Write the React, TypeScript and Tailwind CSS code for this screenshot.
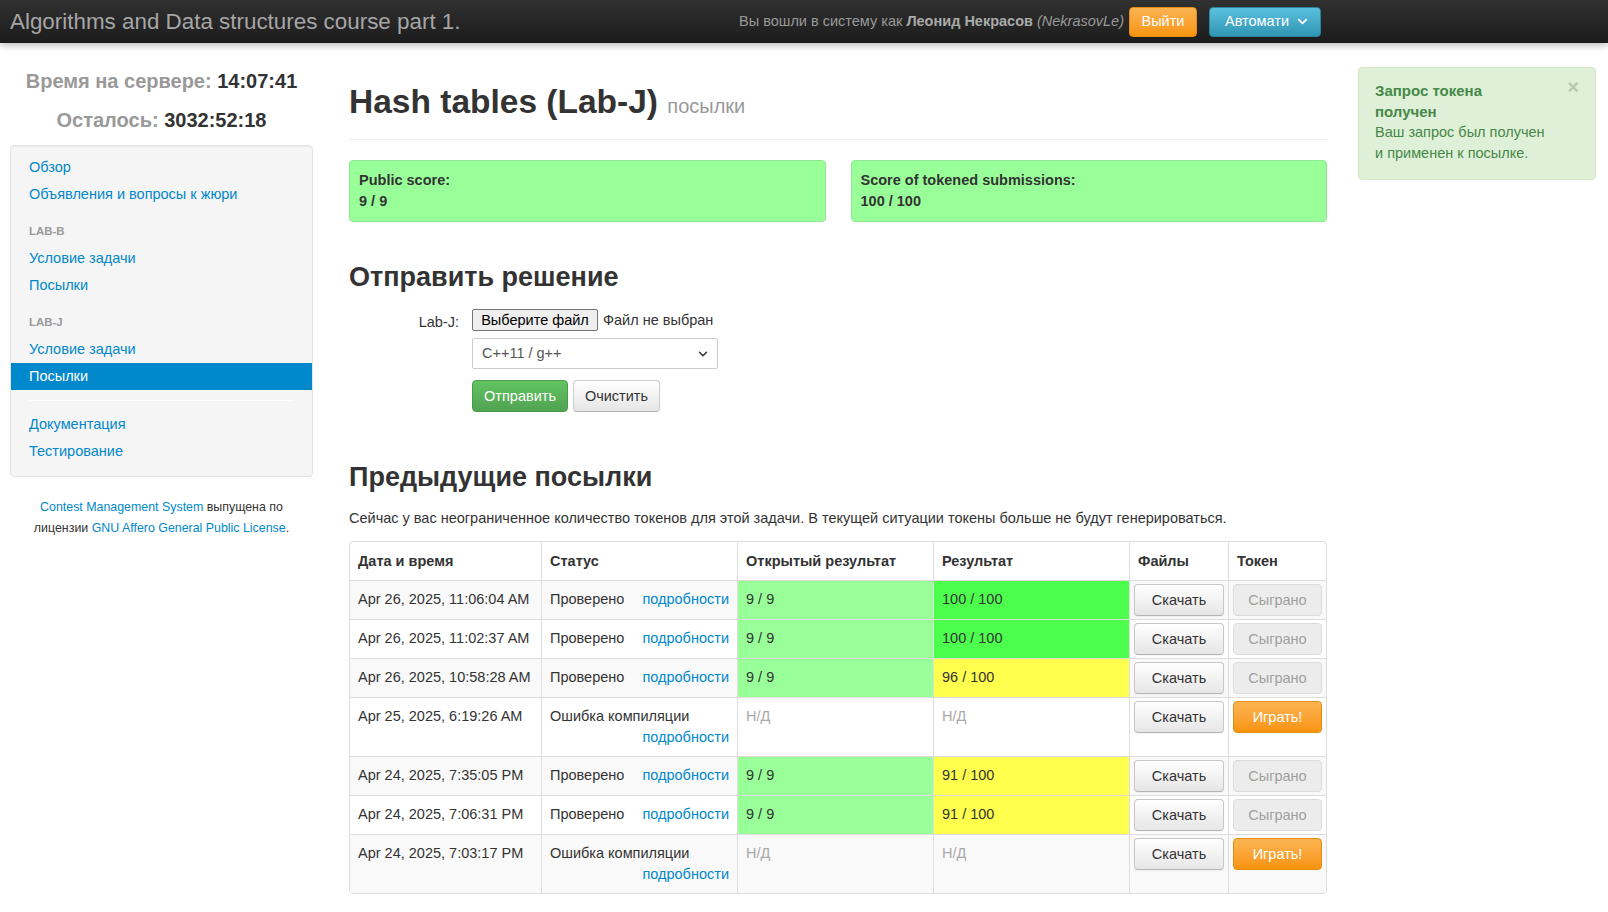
import { ChevronDown } from "lucide-react";

type Row = {
  date: string;
  ok: boolean;
  result?: string;
  resultBg?: string;
  played: boolean;
};

const rows: Row[] = [
  { date: "Apr 26, 2025, 11:06:04 AM", ok: true, result: "100 / 100", resultBg: "bg-[#4dff4d]", played: true },
  { date: "Apr 26, 2025, 11:02:37 AM", ok: true, result: "100 / 100", resultBg: "bg-[#4dff4d]", played: true },
  { date: "Apr 26, 2025, 10:58:28 AM", ok: true, result: "96 / 100", resultBg: "bg-[#ffff4d]", played: true },
  { date: "Apr 25, 2025, 6:19:26 AM", ok: false, played: false },
  { date: "Apr 24, 2025, 7:35:05 PM", ok: true, result: "91 / 100", resultBg: "bg-[#ffff4d]", played: true },
  { date: "Apr 24, 2025, 7:06:31 PM", ok: true, result: "91 / 100", resultBg: "bg-[#ffff4d]", played: true },
  { date: "Apr 24, 2025, 7:03:17 PM", ok: false, played: false },
];

const NavLink = ({ label, active = false }: { label: string; active?: boolean }) => (
  <li
    className={`px-[18px] py-[3px] leading-[21px] ${
      active ? "bg-[#0088cc] text-white" : "text-[#0088cc]"
    }`}
  >
    {label}
  </li>
);

const NavHeader = ({ label }: { label: string }) => (
  <li className="mt-[10px] px-[18px] py-[3px] leading-[21px] text-[11.4px] font-bold uppercase text-[#999]">
    {label}
  </li>
);

const btnDefault =
  "h-[32px] w-full rounded-[4px] border border-[#c8c8c8] border-b-[#b3b3b3] bg-gradient-to-b from-white to-[#e6e6e6] text-[#333] shadow-[inset_0_1px_0_rgba(255,255,255,0.2),0_1px_2px_rgba(0,0,0,0.05)]";

const App = () => {
  return (
    <div className="min-h-screen bg-white font-['Liberation_Sans',Arial,sans-serif] text-[14.5px] leading-[21px] text-[#333]">
      {/* Top bar */}
      <header className="relative z-10 flex h-[43px] items-center justify-between bg-gradient-to-b from-[#313131] to-[#1c1c1c] pl-[10px] pr-[287px] shadow-[0_1px_8px_rgba(0,0,0,0.35)]">
        <div className="text-[22.4px] leading-[43px] text-[#a6a6a6]">
          Algorithms and Data structures course part 1.
        </div>
        <div className="flex items-center">
          <span className="text-[#999]">
            Вы вошли в систему как <b className="text-[#aaa]">Леонид Некрасов</b>{" "}
            <i>(NekrasovLe)</i>
          </span>
          <button className="ml-[5px] h-[30px] w-[68px] rounded-[4px] border border-[#e38d13] bg-gradient-to-b from-[#fbb450] to-[#f89406] text-white">
            Выйти
          </button>
          <div className="ml-[12px] flex h-[30px] w-[112px] items-center rounded-[4px] border border-[#2a85a0] bg-gradient-to-b from-[#5bc0de] to-[#2f96b4] pl-[15px] pr-[10px] text-white">
            <span className="whitespace-nowrap">Автомати</span>
            <ChevronDown className="ml-auto h-[15px] w-[15px]" strokeWidth={3} />
          </div>
        </div>
      </header>

      <div className="relative flex">
        {/* Sidebar */}
        <aside className="ml-[10px] w-[303px] shrink-0">
          <div className="pt-[26px] text-center text-[20px] font-bold leading-[24px]">
            <div>
              <span className="text-[#999]">Время на сервере:</span> 14:07:41
            </div>
            <div className="mt-[15px]">
              <span className="text-[#999]">Осталось:</span> 3032:52:18
            </div>
          </div>

          <ul className="mt-[13px] rounded-[4px] border border-[#e3e3e3] bg-[#f5f5f5] pb-[11px] pt-[8px] shadow-[inset_0_1px_1px_rgba(0,0,0,0.05)]">
            <NavLink label="Обзор" />
            <NavLink label="Объявления и вопросы к жюри" />
            <NavHeader label="Lab-B" />
            <NavLink label="Условие задачи" />
            <NavLink label="Посылки" />
            <NavHeader label="Lab-J" />
            <NavLink label="Условие задачи" />
            <NavLink label="Посылки" active />
            <li className="mx-[18px] my-[10px] h-px border-b border-white bg-[#e5e5e5]" />
            <NavLink label="Документация" />
            <NavLink label="Тестирование" />
          </ul>

          <p className="mt-[20px] text-center text-[12.4px] leading-[21px]">
            <span className="text-[#0088cc]">Contest Management System</span> выпущена по
            <br />
            лицензии <span className="text-[#0088cc]">GNU Affero General Public License</span>.
          </p>
        </aside>

        {/* Main */}
        <main className="ml-[36px] w-[978px] pb-[20px]">
          <div className="mt-[39px] border-b border-[#eee] pb-[13px]">
            <h1 className="text-[33.5px] font-bold leading-[40px]">
              Hash tables (Lab-J){" "}
              <small className="text-[20px] font-normal text-[#999]">посылки</small>
            </h1>
          </div>

          <div className="mt-[20px] grid grid-cols-2 gap-[25px]">
            <div className="rounded-[4px] border border-[#8fe88f] bg-[#99ff99] px-[9px] py-[9px] font-bold">
              <div>Public score:</div>
              <div>9 / 9</div>
            </div>
            <div className="rounded-[4px] border border-[#8fe88f] bg-[#99ff99] px-[9px] py-[9px] font-bold">
              <div>Score of tokened submissions:</div>
              <div>100 / 100</div>
            </div>
          </div>

          <h2 className="mt-[37px] text-[27px] font-bold leading-[36px]">Отправить решение</h2>

          <div className="mt-[14px] flex items-start">
            <label className="w-[110px] pt-[3px] text-right">Lab-J:</label>
            <div className="ml-[13px]">
              <div className="flex items-center">
                <span className="flex h-[22px] w-[126px] items-center justify-center rounded-[2px] border border-[#767676] bg-[#efefef] text-black">
                  Выберите файл
                </span>
                <span className="ml-[5px]">Файл не выбран</span>
              </div>
              <div className="mt-[7px] flex h-[31px] w-[246px] items-center rounded-[2px] border border-[#ccc] bg-white pl-[9px] pr-[7px] text-[#555]">
                C++11 / g++
                <ChevronDown className="ml-auto h-[14px] w-[14px] text-[#333]" strokeWidth={2.5} />
              </div>
              <div className="mt-[11px] flex gap-[5px]">
                <button className="h-[32px] w-[96px] rounded-[4px] border border-[#4a9a4a] bg-gradient-to-b from-[#62c462] to-[#51a351] text-white">
                  Отправить
                </button>
                <button className="h-[32px] w-[87px] rounded-[4px] border border-[#ccc] border-b-[#b3b3b3] bg-gradient-to-b from-white to-[#e6e6e6] text-[#333]">
                  Очистить
                </button>
              </div>
            </div>
          </div>

          <h2 className="mt-[47px] text-[27px] font-bold leading-[36px]">Предыдущие посылки</h2>
          <p className="mt-[13px]">
            Сейчас у вас неограниченное количество токенов для этой задачи. В текущей ситуации токены
            больше не будут генерироваться.
          </p>

          <div className="mt-[12px] overflow-hidden rounded-[4px] border border-[#ddd]">
            <table className="w-full table-fixed border-separate border-spacing-0">
              <colgroup>
                <col className="w-[191px]" />
                <col className="w-[196px]" />
                <col className="w-[196px]" />
                <col className="w-[196px]" />
                <col className="w-[99px]" />
                <col />
              </colgroup>
              <thead>
                <tr className="text-left font-bold">
                  <th className="px-[8px] pb-[8px] pt-[9px]">Дата и время</th>
                  <th className="border-l border-[#ddd] px-[8px] pb-[8px] pt-[9px]">Статус</th>
                  <th className="border-l border-[#ddd] px-[8px] pb-[8px] pt-[9px]">Открытый результат</th>
                  <th className="border-l border-[#ddd] px-[8px] pb-[8px] pt-[9px]">Результат</th>
                  <th className="border-l border-[#ddd] px-[8px] pb-[8px] pt-[9px]">Файлы</th>
                  <th className="border-l border-[#ddd] px-[8px] pb-[8px] pt-[9px]">Токен</th>
                </tr>
              </thead>
              <tbody>
                {rows.map((r, i) => (
                  <tr key={r.date} className={i % 2 === 0 ? "bg-[#f9f9f9]" : "bg-white"}>
                    <td className="border-t border-[#ddd] px-[8px] py-[8px] align-top">{r.date}</td>
                    <td className="border-l border-t border-[#ddd] px-[8px] py-[8px] align-top">
                      {r.ok ? (
                        <div className="flex justify-between">
                          <span>Проверено</span>
                          <span className="text-[#0088cc]">подробности</span>
                        </div>
                      ) : (
                        <>
                          <div>Ошибка компиляции</div>
                          <div className="text-right text-[#0088cc]">подробности</div>
                        </>
                      )}
                    </td>
                    <td
                      className={`border-l border-t border-[#ddd] px-[8px] py-[8px] align-top ${
                        r.ok ? "bg-[#99ff99]" : "text-[#aaa]"
                      }`}
                    >
                      {r.ok ? "9 / 9" : "Н/Д"}
                    </td>
                    <td
                      className={`border-l border-t border-[#ddd] px-[8px] py-[8px] align-top ${
                        r.ok ? r.resultBg : "text-[#aaa]"
                      }`}
                    >
                      {r.ok ? r.result : "Н/Д"}
                    </td>
                    <td className="border-l border-t border-[#ddd] px-[4px] py-[3px] align-top">
                      <button className={btnDefault}>Скачать</button>
                    </td>
                    <td className="border-l border-t border-[#ddd] px-[4px] py-[3px] align-top">
                      {r.played ? (
                        <button className="h-[32px] w-full rounded-[4px] border border-[#dcdcdc] bg-[#ececec] text-[#a0a0a0]">
                          Сыграно
                        </button>
                      ) : (
                        <button className="h-[32px] w-full rounded-[4px] border border-[#e38d13] bg-gradient-to-b from-[#fbb450] to-[#f89406] text-white">
                          Играть!
                        </button>
                      )}
                    </td>
                  </tr>
                ))}
              </tbody>
            </table>
          </div>
        </main>

        {/* Notification */}
        <div className="absolute right-[12px] top-[24px] w-[238px] rounded-[4px] border border-[#d3e8c6] bg-[#dff0d8] pb-[16px] pl-[16px] pr-[14px] pt-[12px] text-[#468847]">
          <span className="absolute right-[16px] top-[9px] text-[20px] font-bold leading-[20px] text-[#b8c9b2]">
            ×
          </span>
          <div className="text-[15px] font-bold leading-[21px]">
            Запрос токена
            <br />
            получен
          </div>
          <div className="leading-[20.5px]">
            Ваш запрос был получен
            <br />и применен к посылке.
          </div>
        </div>
      </div>
    </div>
  );
};

export default App;
